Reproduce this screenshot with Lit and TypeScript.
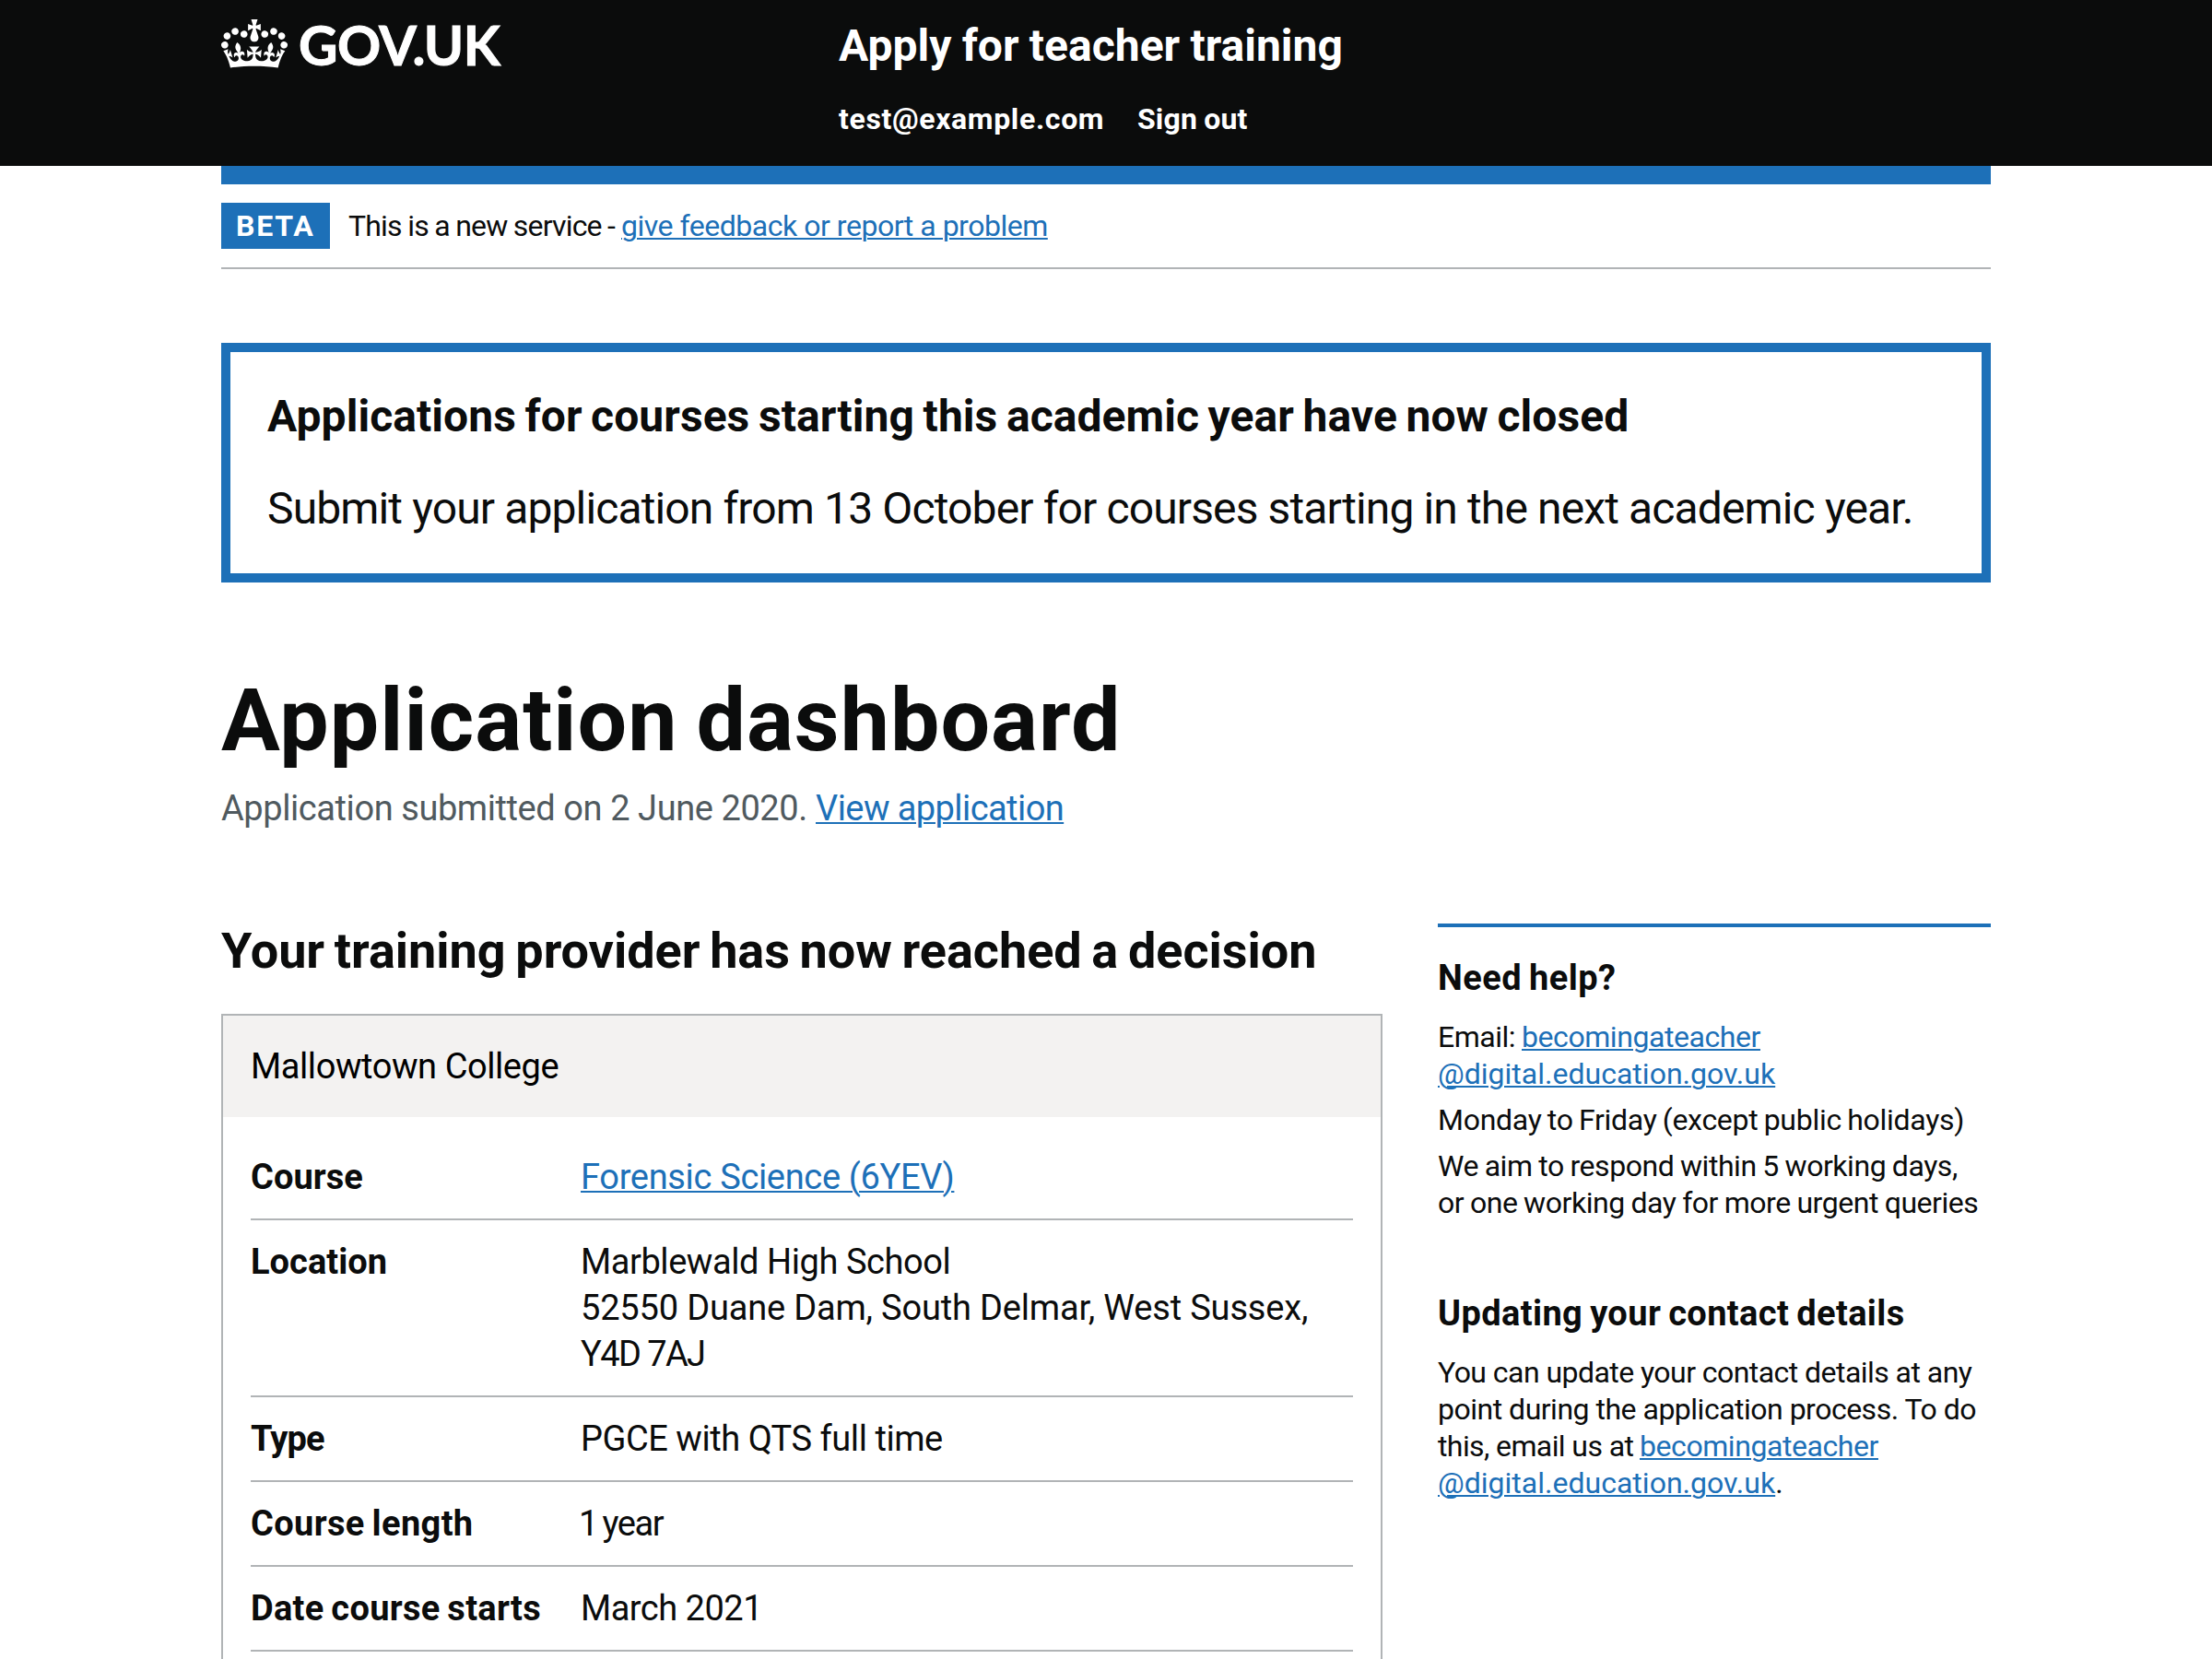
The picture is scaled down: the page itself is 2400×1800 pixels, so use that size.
import { LitElement, html, css, type TemplateResult } from "lit";
import { customElement } from "lit/decorators.js";

interface SummaryRow {
  id: string;
  label: string;
  value: TemplateResult;
}

const EMAIL_USER = "becomingateacher";
const EMAIL_HOST = "@digital.education.gov.uk";

const ROWS: SummaryRow[] = [
  { id: "course", label: "Course", value: html`<a class="line v-course" href="#">Forensic Science (6YEV)</a>` },
  {
    id: "location",
    label: "Location",
    value: html`<span class="line v-school">Marblewald High School</span>
      <span class="line v-street">52550 Duane Dam, South Delmar, West Sussex,</span>
      <span class="line v-postcode">Y4D 7AJ</span>`,
  },
  { id: "type", label: "Type", value: html`<span class="line v-type">PGCE with QTS full time</span>` },
  { id: "length", label: "Course length", value: html`<span class="line v-length">1 year</span>` },
  { id: "date", label: "Date course starts", value: html`<span class="line v-date">March 2021</span>` },
];

@customElement("site-header")
export class SiteHeader extends LitElement {
  static styles = css`
    :host { display: block; height: 180px; background: #0b0c0c; color: #fff; }
    .inner { display: flex; width: 1920px; margin: 0 auto; padding-top: 20px; box-sizing: border-box; }
    .logo { display: flex; align-items: flex-start; width: 670px; gap: 12px; }
    .crown { display: block; width: 72px; height: 53px; margin-top: 1px; fill: #fff; }
    .logotype { margin-top: -2px; font: 700 58.5px/60px Lato, "Liberation Sans", sans-serif; letter-spacing: -0.5px; -webkit-text-stroke: 1px #fff; }
    .content { display: flex; flex-direction: column; gap: 29px; font-weight: 700; word-spacing: -0.05em; white-space: nowrap; }
    .service { font-size: 48px; line-height: 60px; letter-spacing: 0.03px; }
    .nav { display: flex; font-size: 32px; line-height: 40px; }
    .user { width: 324px; letter-spacing: 0.64px; }
    .out { letter-spacing: 0.15px; }
  `;
  render() {
    return html`
      <header class="inner">
        <div class="logo">
          <svg class="crown" viewBox="0 0 132 97" aria-hidden="true">
            <path fill-rule="evenodd" d="M25 30.2c3.5 1.5 7.7-.2 9.1-3.7 1.5-3.6-.2-7.8-3.9-9.2-3.6-1.4-7.6.3-9.1 3.9-1.4 3.5.3 7.5 3.9 9zM9 39.5c3.6 1.5 7.8-.2 9.2-3.7 1.5-3.6-.2-7.8-3.9-9.1-3.6-1.5-7.6.2-9.1 3.8-1.4 3.5.3 7.5 3.8 9zM4.4 57.2c3.5 1.5 7.7-.2 9.1-3.8 1.5-3.6-.2-7.7-3.9-9.1-3.5-1.5-7.6.3-9.1 3.8-1.4 3.5.3 7.6 3.9 9.1zm38.3-21.4c3.5 1.5 7.7-.2 9.1-3.8 1.5-3.6-.2-7.7-3.9-9.1-3.6-1.5-7.6.3-9.1 3.8-1.3 3.6.4 7.7 3.9 9.1zm64.4-5.6c-3.6 1.5-7.8-.2-9.1-3.7-1.5-3.6.2-7.8 3.8-9.2 3.6-1.4 7.7.3 9.2 3.9 1.3 3.5-.4 7.5-3.9 9zm15.9 9.3c-3.6 1.5-7.7-.2-9.1-3.7-1.5-3.6.2-7.8 3.7-9.1 3.6-1.5 7.7.2 9.2 3.8 1.5 3.5-.3 7.5-3.8 9zm4.7 17.7c-3.6 1.5-7.8-.2-9.2-3.8-1.5-3.6.2-7.7 3.9-9.1 3.6-1.5 7.7.3 9.2 3.8 1.3 3.5-.4 7.6-3.9 9.1zM89.3 35.8c-3.6 1.5-7.8-.2-9.2-3.8-1.4-3.6.2-7.7 3.9-9.1 3.6-1.5 7.7.3 9.2 3.8 1.4 3.6-.3 7.7-3.9 9.1zM69.7 17.7l8.9 4.7V9.3l-8.9 2.8c-.2-.3-.5-.6-.9-.9L72.4 0H59.6l3.5 11.2c-.3.3-.6.5-.9.9l-8.8-2.8v13.1l8.8-4.7c.3.3.6.7.9.9l-5 15.4v.1c-.2.8-.4 1.6-.4 2.4 0 4.1 3.1 7.5 7 8.1h.2c.3 0 .7.1 1 .1.4 0 .7 0 1-.1h.2c4-.6 7.1-4.1 7.1-8.1 0-.8-.1-1.7-.4-2.4V34l-5.1-15.4c.4-.2.7-.6 1-.9zM66 92.8c16.9 0 32.8 1.1 47.1 3.2 4-16.9 8.9-26.7 14-33.5l-9.6-3.4c1 4.9 1.1 7.2 0 10.2-1.5-1.4-3-4.3-4.2-8.7L108.6 76c2.8-2 5-3.2 7.5-3.3-4.4 9.4-10 11.9-13.6 11.2-4.3-.8-6.3-4.6-5.6-7.9 1-4.7 5.7-5.9 8-.5 4.3-8.7-3-11.4-7.6-8.8 7.1-7.2 7.9-13.5 2.1-21.1-8 6.1-8.1 12.3-4.5 20.8-4.7-5.4-12.1-2.5-9.5 6.2 3.4-5.2 7.9-2 7.2 3.1-.6 4.3-6.4 7.8-13.5 7.2-10.3-.9-10.9-8-11.2-13.8 2.5-.5 7.1 1.8 11 7.3L80.2 60c-4.1 4.4-8 5.3-12.3 5.4 1.4-4.4 8-11.6 8-11.6H55.5s6.4 7.2 7.9 11.6c-4.2-.1-8-1-12.3-5.4l1.4 16.4c3.9-5.5 8.5-7.7 10.9-7.3-.3 5.8-.9 12.8-11.1 13.8-7.2.6-12.9-2.9-13.5-7.2-.7-5 3.8-8.3 7.1-3.1 2.7-8.7-4.6-11.6-9.4-6.2 3.7-8.5 3.6-14.7-4.6-20.8-5.8 7.6-5 13.9 2.2 21.1-4.7-2.6-11.9.1-7.7 8.8 2.3-5.5 7.1-4.2 8.1.5.7 3.3-1.3 7.1-5.7 7.9-3.5.7-9-1.8-13.5-11.2 2.5.1 4.7 1.3 7.5 3.3l-4.7-15.4c-1.2 4.4-2.7 7.2-4.3 8.7-1.1-3-.9-5.3 0-10.2l-9.5 3.4c5 6.9 9.9 16.7 14 33.5 14.8-2.1 30.8-3.2 47.7-3.2z"/>
          </svg>
          <span class="logotype">GOV.UK</span>
        </div>
        <div class="content">
          <div class="service">Apply for teacher training</div>
          <nav class="nav"><span class="user">test@example.com</span><span class="out">Sign out</span></nav>
        </div>
      </header>
    `;
  }
}

const linkStyles = css`
  a {
    color: #1d70b8;
    text-decoration: underline;
    text-decoration-thickness: 2px;
    text-underline-offset: 2px;
  }
`;

@customElement("course-card")
export class CourseCard extends LitElement {
  static styles = [
    linkStyles,
    css`
      :host { display: block; height: 900px; box-sizing: border-box; border: 2px solid #b1b4b6; font-size: 38px; line-height: 50px; }
      .title { padding: 30px; background: #f3f2f1; color: #000; letter-spacing: -0.42px; }
      .rows { margin: 0; padding: 20px 30px; }
      .row { display: grid; grid-template-columns: 358px 1fr; padding: 20px 0; border-bottom: 2px solid #b1b4b6; }
      dt { font-weight: 700; word-spacing: -0.05em; white-space: nowrap; }
      dd { margin: 0; display: flex; flex-direction: column; align-items: flex-start; }
      .line { white-space: nowrap; }
      .k-course, .k-location { letter-spacing: 0.05px; }
      .k-type { letter-spacing: -0.9px; }
      .k-length { letter-spacing: 0.36px; }
      .k-date { letter-spacing: 0.28px; }
      .v-course { letter-spacing: -0.33px; }
      .v-school { letter-spacing: -0.43px; }
      .v-street { letter-spacing: -0.18px; }
      .v-postcode { letter-spacing: -1.6px; }
      .v-type { letter-spacing: -0.45px; }
      .v-length { letter-spacing: -1.4px; word-spacing: -2.5px; margin-left: -2px; }
      .v-date { letter-spacing: -0.5px; }
    `,
  ];
  render() {
    return html`
      <div class="title">Mallowtown College</div>
      <dl class="rows">
        ${ROWS.map((r) => html`<div class="row"><dt class="k-${r.id}">${r.label}</dt><dd>${r.value}</dd></div>`)}
      </dl>
    `;
  }
}

@customElement("help-panel")
export class HelpPanel extends LitElement {
  static styles = [
    linkStyles,
    css`
      :host { display: block; width: 600px; box-sizing: border-box; border-top: 4px solid #1d70b8; padding-top: 30px; font-size: 32px; line-height: 40px; white-space: nowrap; }
      h3 { margin: 0 0 19px; font-size: 38px; line-height: 50px; font-weight: 700; word-spacing: -0.05em; letter-spacing: 0.45px; }
      h3.second { margin-top: 75px; letter-spacing: 0.39px; }
      p { margin: 0 0 10px; display: flex; flex-direction: column; align-items: flex-start; }
      .line { display: flex; }
      .label { width: 91px; letter-spacing: -0.5px; }
      .user { letter-spacing: -0.43px; }
      .host { letter-spacing: 0.01px; }
      .hours { letter-spacing: -0.28px; word-spacing: -1.4px; }
      .aim { letter-spacing: -0.45px; word-spacing: -0.8px; }
      .you { letter-spacing: -0.55px; }
      .point { letter-spacing: -0.5px; }
      .this { width: 219px; letter-spacing: -0.6px; }
    `,
  ];
  render() {
    return html`
      <h3>Need help?</h3>
      <p>
        <span class="line"><span class="label">Email:</span><a class="user" href="#">${EMAIL_USER}</a></span>
        <span class="line"><a class="host" href="#">${EMAIL_HOST}</a></span>
      </p>
      <p><span class="line hours">Monday to Friday (except public holidays)</span></p>
      <p>
        <span class="line aim">We aim to respond within 5 working days,</span>
        <span class="line aim">or one working day for more urgent queries</span>
      </p>
      <h3 class="second">Updating your contact details</h3>
      <p>
        <span class="line you">You can update your contact details at any</span>
        <span class="line point">point during the application process. To do</span>
        <span class="line"><span class="this">this, email us at</span><a class="user" href="#">${EMAIL_USER}</a></span>
        <span class="line"><a class="host" href="#">${EMAIL_HOST}</a>.</span>
      </p>
    `;
  }
}

@customElement("app-root")
export class AppRoot extends LitElement {
  static styles = [
    linkStyles,
    css`
      :host { display: block; height: 1800px; overflow: hidden; background: #fff; color: #0b0c0c; font-family: Roboto, "Liberation Sans", sans-serif; }
      .page { width: 1920px; margin: 0 auto; }
      .bar { height: 20px; background: #1d70b8; }
      .phase { display: flex; padding: 20px 0; border-bottom: 2px solid #b1b4b6; font-size: 32px; line-height: 50px; white-space: nowrap; }
      .tag { width: 118px; box-sizing: border-box; padding-left: 16px; margin-right: 20px; background: #1d70b8; color: #fff; font-weight: 700; letter-spacing: 1.8px; }
      .notice { width: 296px; letter-spacing: -0.8px; word-spacing: -0.8px; }
      .feedback { letter-spacing: -0.48px; }
      .banner { display: flex; flex-direction: column; gap: 40px; margin-top: 80px; padding: 40px; border: 10px solid #1d70b8; font-size: 48px; line-height: 60px; white-space: nowrap; }
      h2, p, h1 { margin: 0; font-size: inherit; }
      .closed { word-spacing: -0.05em; letter-spacing: 0.06px; }
      .from { letter-spacing: -0.87px; }
      h1 { margin-top: 100px; font-size: 95px; line-height: 100px; word-spacing: -0.05em; letter-spacing: 1.05px; }
      .caption { display: flex; margin-top: 20px; font-size: 38px; line-height: 50px; color: #505a5f; white-space: nowrap; }
      .submitted { width: 645px; letter-spacing: -0.42px; }
      .view { letter-spacing: -0.57px; }
      .columns { display: flex; justify-content: space-between; align-items: flex-start; margin-top: 100px; }
      .main { width: 1260px; }
      .decision { margin-bottom: 38px; font-size: 54px; line-height: 60px; word-spacing: -0.05em; letter-spacing: -0.03px; white-space: nowrap; }
    `,
  ];
  render() {
    return html`
      <site-header></site-header>
      <div class="page">
        <div class="bar"></div>
        <div class="phase">
          <strong class="tag">BETA</strong>
          <span class="notice">This is a new service -</span>
          <a class="feedback" href="#">give feedback or report a problem</a>
        </div>
        <section class="banner">
          <h2 class="closed">Applications for courses starting this academic year have now closed</h2>
          <p class="from">Submit your application from 13 October for courses starting in the next academic year.</p>
        </section>
        <h1>Application dashboard</h1>
        <div class="caption">
          <span class="submitted">Application submitted on 2 June 2020.</span>
          <a class="view" href="#">View application</a>
        </div>
        <div class="columns">
          <main class="main">
            <h2 class="decision">Your training provider has now reached a decision</h2>
            <course-card></course-card>
          </main>
          <help-panel></help-panel>
        </div>
      </div>
    `;
  }
}
